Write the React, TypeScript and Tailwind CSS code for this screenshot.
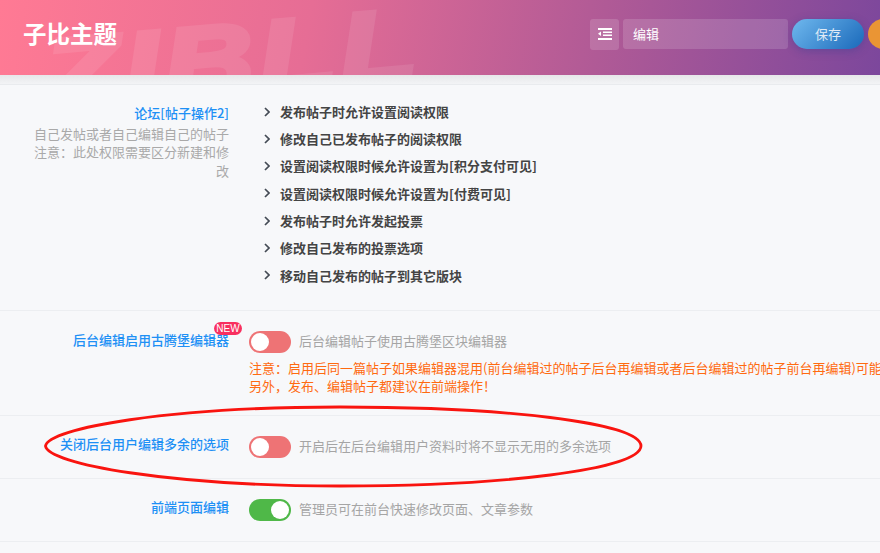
const font = { fontFamily: '"Noto Sans CJK SC", "Liberation Sans", sans-serif' };

const items = [
  '发布帖子时允许设置阅读权限',
  '修改自己已发布帖子的阅读权限',
  '设置阅读权限时候允许设置为[积分支付可见]',
  '设置阅读权限时候允许设置为[付费可见]',
  '发布帖子时允许发起投票',
  '修改自己发布的投票选项',
  '移动自己发布的帖子到其它版块',
];

function Toggle({ on }: { on?: boolean }) {
  return (
    <span className={`flex h-[22px] w-[42px] shrink-0 rounded-full p-[2px] ${on ? 'justify-end bg-[#4fb848]' : 'justify-start bg-[#ee7375]'}`}>
      <span className="h-[18px] w-[18px] rounded-full bg-white" />
    </span>
  );
}

function Chevron() {
  return (
    <svg width="6" height="10" viewBox="0 0 6 10" className="shrink-0">
      <path d="M1 1l4 4-4 4" fill="none" stroke="#444b55" strokeWidth="1.7" />
    </svg>
  );
}

export default function App() {
  return (
    <div className="relative h-[553px] w-[880px] overflow-hidden bg-[#f7f8fa] text-[13px]" style={font}>
      <header className="relative z-10 flex h-[75px] items-center justify-between overflow-hidden bg-[linear-gradient(100deg,#ff7a94_0%,#e66d95_35%,#b05a96_68%,#7c479c_100%)] pl-[23px]">
        <div className="absolute top-[25px] left-[46px] origin-[0_85px] [transform:rotate(-5deg)_scaleX(1.25)] text-[100px] leading-none font-bold tracking-[4px] text-white italic opacity-[0.09] [-webkit-text-stroke:5px_white]" style={{ fontFamily: '"Liberation Sans", sans-serif' }}>
          ZIBLL
        </div>
        <h1 className="relative mb-[8px] text-[23.5px] leading-none font-bold text-white">子比主题</h1>
        <div className="relative -mr-[40px] flex shrink-0 items-start gap-[4px] pb-[7px]">
          <div className="flex h-[31px] w-[29px] items-center justify-center rounded-[3px] bg-white/15">
            <svg width="14" height="12" viewBox="0 0 14 12" fill="white">
              <rect x="0" y="0" width="14" height="2" />
              <rect x="5" y="3.5" width="9" height="1.5" />
              <rect x="5" y="6.5" width="9" height="1.5" />
              <rect x="0" y="10" width="14" height="2" />
              <path d="M3 3.5v4.5L0 5.8z" />
            </svg>
          </div>
          <div className="flex h-[30px] w-[165px] items-center rounded-[3px] bg-white/15 pl-[10px] text-white">编辑</div>
          <button className="h-[30px] w-[72px] rounded-full bg-[linear-gradient(135deg,#6fb8ee,#1a69ba)] text-[#dfeaf6] shadow-[0_2px_8px_rgba(40,60,140,0.35)]">保存</button>
          <button className="h-[30px] w-[52px] rounded-full bg-[#ea9534]" />
        </div>
      </header>
      <div className="h-[9px] bg-[linear-gradient(#e6e7e9,#f3f4f6)]" />
      <main className="border-t border-[#e9ebee]">
        <section className="flex h-[226px] gap-[20px] border-b border-[#eceef1] pt-[19px]">
          <div className="w-[229px] shrink-0 pl-[30px] text-right leading-[18.5px] text-[#a9a9a9]">
            <div className="mb-[2px] font-medium text-[#1e90f5]">论坛[帖子操作2]</div>
            <div>自己发帖或者自己编辑自己的帖子</div>
            <div>注意：此处权限需要区分新建和修改</div>
          </div>
          <ul className="-mt-[2px] flex flex-col gap-[8.3px] pl-[15px] text-[#444]">
            {items.map((t) => (
              <li key={t} className="flex h-[19px] items-center gap-[10px] font-semibold">
                <Chevron />
                <span>{t}</span>
              </li>
            ))}
          </ul>
        </section>
        <section className="flex h-[105px] gap-[20px] border-b border-[#eceef1] pt-[20px]">
          <div className="relative h-[20px] w-[229px] shrink-0 text-right leading-[18px] font-medium text-[#1e90f5]">
            后台编辑启用古腾堡编辑器
            <span className="absolute -top-[9px] -right-[13px] flex h-[13px] w-[28px] items-center justify-center rounded-full bg-[#f8305f] text-[10px] leading-none font-normal text-white" style={{ fontFamily: '"Liberation Sans", sans-serif' }}>NEW</span>
          </div>
          <div className="min-w-0 flex-1">
            <div className="flex items-center gap-[8px] text-[#a5a5a5]">
              <Toggle />
              <span className="-mt-[2px]">后台编辑帖子使用古腾堡区块编辑器</span>
            </div>
            <div className="mt-[6px] whitespace-nowrap leading-[18px] text-[#ff6a10]">
              <div>注意：启用后同一篇帖子如果编辑器混用(前台编辑过的帖子后台再编辑或者后台编辑过的帖子前台再编辑)可能会出现问题</div>
              <div>另外，发布、编辑帖子都建议在前端操作！</div>
            </div>
          </div>
        </section>
        <section className="flex h-[63px] gap-[20px] border-b border-[#eceef1] pt-[20px]">
          <div className="-mt-[1px] h-[20px] w-[229px] shrink-0 text-right leading-[18px] font-medium text-[#1e90f5]">关闭后台用户编辑多余的选项</div>
          <div className="flex items-center gap-[8px] self-start text-[#a5a5a5]">
            <Toggle />
            <span className="-mt-[2px]">开启后在后台编辑用户资料时将不显示无用的多余选项</span>
          </div>
        </section>
        <section className="flex h-[63px] gap-[20px] border-b border-[#eceef1] pt-[20px]">
          <div className="-mt-[1px] h-[20px] w-[229px] shrink-0 text-right leading-[18px] font-medium text-[#1e90f5]">前端页面编辑</div>
          <div className="flex items-center gap-[8px] self-start text-[#a5a5a5]">
            <Toggle on />
            <span className="-mt-[2px]">管理员可在前台快速修改页面、文章参数</span>
          </div>
        </section>
      </main>
      <svg className="pointer-events-none absolute top-0 left-0 z-20" width="880" height="553" viewBox="0 0 880 553">
        <path d="M45.5 446C48 428 170 407 340 407C500 407 640 422 641 446C640 470 500 486 340 486C170 486 48 464 45.5 446Z" fill="none" stroke="#f9140f" strokeWidth="2.8" />
      </svg>
    </div>
  );
}
